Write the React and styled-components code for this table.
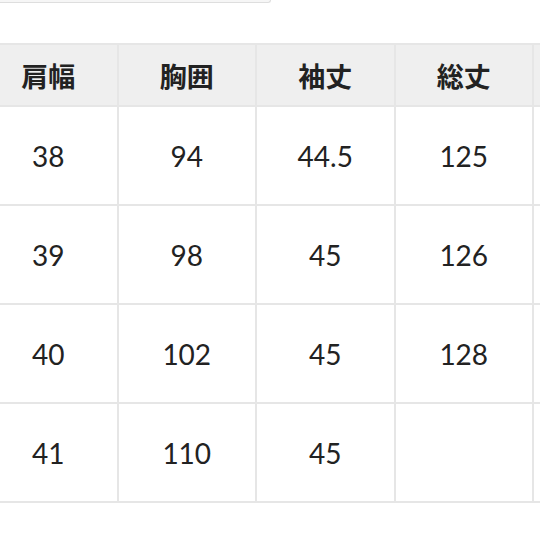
import React from 'react';
import styled, { createGlobalStyle } from 'styled-components';

const GlobalStyle = createGlobalStyle`
  html, body {
    margin: 0;
    padding: 0;
    background: #fff;
  }
  body {
    width: 540px;
    height: 540px;
    overflow: hidden;
  }
  *, *::before, *::after {
    box-sizing: border-box;
  }
`;

const Page = styled.div`
  width: 540px;
  height: 540px;
  overflow: hidden;
`;

// bottom edge of an input box cut off at the top of the shot
const InputEdge = styled.div`
  width: 271px;
  height: 3px;
  background: #f6f6f6;
  border-bottom: 1px solid #dedede;
  border-right: 1px solid #dedede;
  border-bottom-right-radius: 3px;
  margin-bottom: 40px;
`;

const Table = styled.div`
  margin-left: -20px;
  width: 700px;
  border-top: 2px solid #e6e6e6;
`;

const Row = styled.div`
  display: grid;
  grid-template-columns: repeat(5, 138.5px);
  height: ${(p) => p.$height}px;
  background: ${(p) => (p.$head ? '#efefef' : '#fff')};
  border-bottom: 2px solid #e6e6e6;
`;

const Cell = styled.div`
  display: flex;
  align-items: center;
  justify-content: center;
  border-right: 2px solid #e6e6e6;
  color: #222;
  font-family: ${(p) =>
    p.$head
      ? '"Noto Sans CJK JP", "Noto Sans", sans-serif'
      : 'Lato, "Noto Sans", sans-serif'};
  font-weight: ${(p) => (p.$head ? 700 : 400)};
  font-size: ${(p) => (p.$head ? '27px' : '28px')};
`;

const headers = ['肩幅', '胸囲', '袖丈', '総丈', ''];
const rows = [
  ['38', '94', '44.5', '125', ''],
  ['39', '98', '45', '126', ''],
  ['40', '102', '45', '128', ''],
  ['41', '110', '45', '', ''],
];

export default function App() {
  return (
    <Page>
      <GlobalStyle />
      <InputEdge />
      <Table>
        <Row $head $height={62}>
          {headers.map((h, i) => (
            <Cell $head key={i}>{h}</Cell>
          ))}
        </Row>
        {rows.map((r, i) => (
          <Row key={i} $height={99}>
            {r.map((v, j) => (
              <Cell key={j}>{v}</Cell>
            ))}
          </Row>
        ))}
      </Table>
    </Page>
  );
}
